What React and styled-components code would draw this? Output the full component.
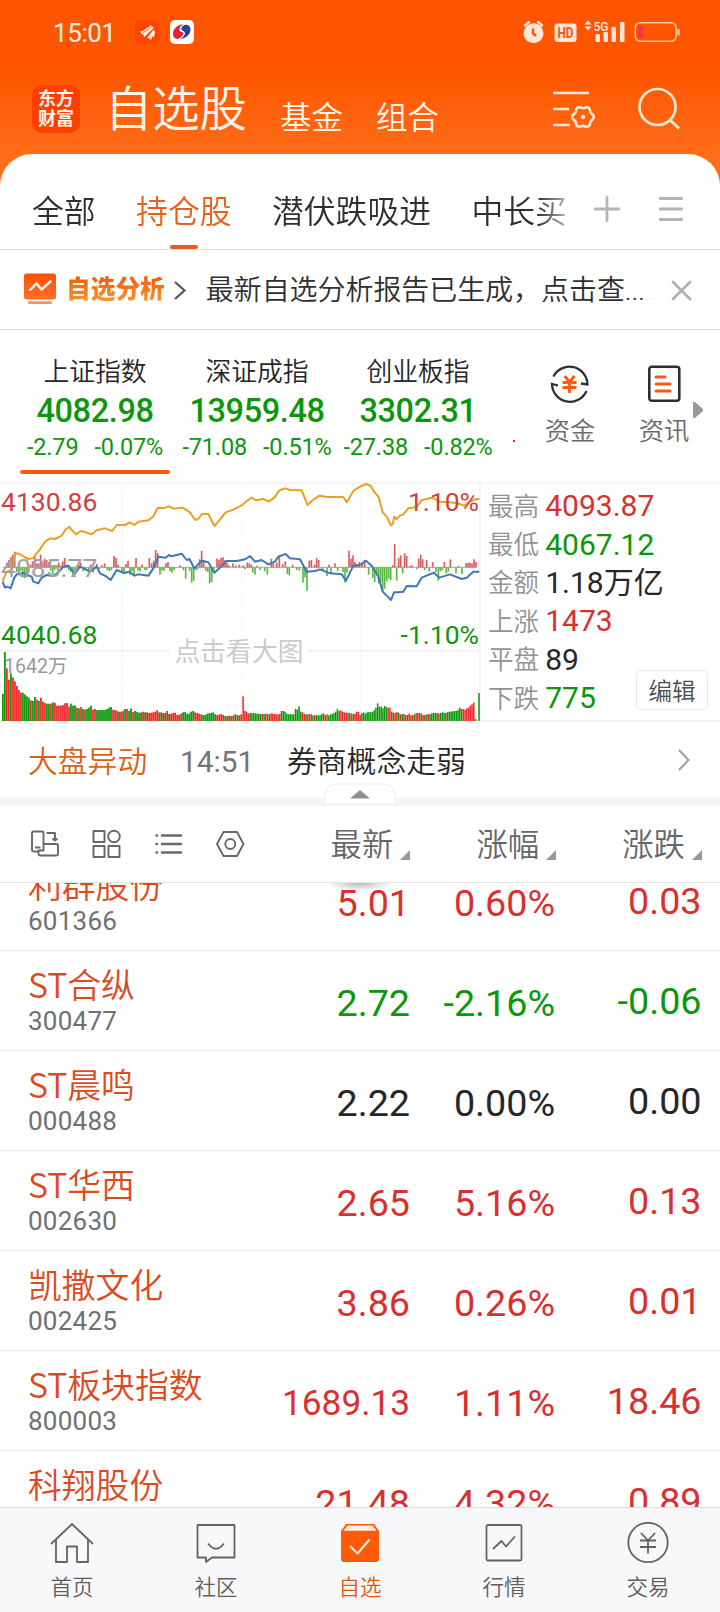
import React from 'react';
import styled, { createGlobalStyle } from 'styled-components';

const RED = '#d9302f';
const GREEN = '#0c960c';
const BLACK = '#262628';
const THIN = 350;
const tones = { up: RED, down: GREEN, flat: BLACK };

const Global = createGlobalStyle`
  * { box-sizing: border-box; }
  body { margin: 0; background: #fff; }
  body, button { font-family: Roboto, "Noto Sans CJK SC", sans-serif; }
  svg { display: block; flex: none; overflow: visible; }
`;

const Screen = styled.div`
  width: 720px;
  height: 1612px;
  display: flex;
  flex-direction: column;
  overflow: hidden;
  background: linear-gradient(#ff5500 0, #ff5500 70px, #ff6e1a 158px, #ff6e1a 200px, #fff 200px);
  color: ${BLACK};
`;

/* ---------- status bar and header ---------- */
const StatusBar = styled.div`
  height: 64px;
  flex: none;
  display: flex;
  align-items: center;
  padding: 0 40px 0 53px;
`;
const Clock = styled.div`
  width: 82px;
  font-size: 26px;
  letter-spacing: -0.4px;
  line-height: 32px;
  padding-top: 2px;
  color: #fff3ea;
`;
const StatusLeft = styled.div`
  display: flex;
  gap: 11px;
  flex: 1;
`;
const Header = styled.div`
  height: 90px;
  flex: none;
  display: flex;
  align-items: flex-start;
  padding: 21px 39px 0 32px;
`;
const Logo = styled.div`
  width: 48px;
  height: 48px;
  border-radius: 10px;
  background: #ff4000;
  color: #fff6ee;
  font-weight: 700;
  font-size: 18px;
  line-height: 20px;
  text-align: center;
  padding-top: 4px;
`;
const Title = styled.div`
  margin-left: 25px;
  width: 145px;
  font-size: 47.3px;
  font-weight: ${THIN};
  line-height: 50px;
  color: #fff8f0;
  white-space: nowrap;
`;
const HeaderLink = styled.div`
  margin: 17px 0 0 30px;
  width: 66px;
  font-size: 31.5px;
  font-weight: ${THIN};
  line-height: 34px;
  color: #fff4e8;
  white-space: nowrap;
`;
const HeaderTools = styled.div`
  margin: 3px 0 0 auto;
  display: flex;
  gap: 42px;
`;

const Sheet = styled.div`
  flex: 1;
  min-height: 0;
  display: flex;
  flex-direction: column;
  background: #fff;
  border-radius: 32px 32px 0 0;
`;

/* ---------- group tabs ---------- */
const Tabs = styled.div`
  height: 96px;
  flex: none;
  display: flex;
  border-bottom: 1px solid #e2e2e4;
  padding-left: 32px;
`;
const TabStrip = styled.div`
  width: 536px;
  overflow: hidden;
  display: flex;
  gap: 40.5px;
  mask-image: linear-gradient(90deg, #000 505px, rgba(0, 0, 0, 0.35) 536px);
`;
const Tab = styled.div`
  flex: none;
  display: flex;
  flex-direction: column;
  align-items: center;
  justify-content: space-between;
  padding-top: 39px;
  font-size: 31.8px;
  font-weight: ${THIN};
  line-height: 38px;
  white-space: nowrap;
  color: ${(p) => (p.$active ? '#e8611a' : '#2f2f31')};
  &::after {
    content: '';
    width: 28px;
    height: 4px;
    border-radius: 2px;
    background: ${(p) => (p.$active ? '#e2601c' : 'transparent')};
  }
`;
const TabTools = styled.div`
  display: flex;
  gap: 39px;
  padding: 42px 0 0 26px;
`;

/* ---------- report banner ---------- */
const Banner = styled.div`
  height: 80px;
  flex: none;
  display: flex;
  align-items: center;
  padding: 1px 29px 0 24px;
  border-bottom: 1px solid #e2e2e4;
  & > svg:first-child { margin-top: -3px; }
`;
const BannerTag = styled.div`
  margin: 0 9px 0 10px;
  font-size: 24.7px;
  font-weight: 900;
  line-height: 32px;
  white-space: nowrap;
  background: linear-gradient(#f2600e 15%, #f8952a 85%);
  background-clip: text;
  -webkit-background-clip: text;
  color: transparent;
`;
const BannerText = styled.div`
  margin-left: 20px;
  flex: 1;
  font-size: 27.95px;
  font-weight: ${THIN};
  line-height: 34px;
  padding-top: 2px;
  white-space: nowrap;
  color: #2f2f31;
`;

/* ---------- indices ---------- */
const Indices = styled.div`
  height: 152px;
  flex: none;
  display: flex;
  padding-left: 20px;
`;
const IndexCard = styled.div`
  width: 150px;
  margin-right: ${(p) => p.$gap}px;
  flex: none;
  padding-top: 25px;
  display: flex;
  flex-direction: column;
  align-items: center;
  white-space: nowrap;
  &::after {
    content: '';
    width: 150px;
    height: 4px;
    margin-top: 8px;
    border-radius: 2px;
    background: ${(p) => (p.$active ? '#ff5a0c' : 'transparent')};
  }
`;
const IndexName = styled.div`
  font-size: 25.8px;
  font-weight: ${THIN};
  line-height: 34px;
`;
const IndexValue = styled.div`
  font-size: 32.5px;
  font-weight: 500;
  line-height: 43px;
  padding-top: 1px;
  margin-bottom: -1px;
  letter-spacing: -0.4px;
  color: ${GREEN};
`;
const IndexDelta = styled.div`
  display: flex;
  gap: 16px;
  font-size: 23.5px;
  line-height: 30px;
  letter-spacing: -0.15px;
  color: ${GREEN};
`;
const RedDot = styled.i`
  width: 2px;
  height: 2px;
  margin: 110px 30px 0 -1px;
  background: ${RED};
`;
const Shortcut = styled.div`
  width: 50px;
  margin-right: 44px;
  padding-top: 35px;
  display: flex;
  flex-direction: column;
  align-items: center;
  gap: 13px;
  font-size: 25.3px;
  font-weight: ${THIN};
  line-height: 32px;
  color: #6a6a6c;
  white-space: nowrap;
`;
const More = styled.div`
  margin: 72px 0 0 -40px;
`;

/* ---------- chart and stats ---------- */
const Market = styled.div`
  height: 240px;
  flex: none;
  display: flex;
  border-top: 2px solid #f4f4f6;
  border-bottom: 2px solid #f4f4f6;
`;
const ChartBox = styled.div`
  position: relative;
  width: 481px;
  height: 236px;
  border-right: 2px solid #f4f4f6;
`;
const ChartLabel = styled.span`
  position: absolute;
  top: ${(p) => p.$top}px;
  ${(p) => (p.$right ? 'right: 0' : 'left: 1px')};
  font-size: 26.5px;
  line-height: 30px;
  color: ${(p) => p.$color};
`;
const VolumeLabel = styled(ChartLabel)`
  left: 4px;
  font-size: 19.5px;
  line-height: 24px;
`;
const ChartHint = styled.span`
  position: absolute;
  left: 170px;
  top: 152px;
  width: 138px;
  background: #fff;
  text-align: center;
  font-size: 25.8px;
  line-height: 32px;
  color: #cbcbcb;
`;
const Stats = styled.div`
  position: relative;
  flex: 1;
  padding: 3px 0 0 7px;
`;
const Stat = styled.div`
  height: 38.4px;
  display: flex;
  align-items: center;
  gap: 6px;
`;
const StatLabel = styled.span`
  font-size: 25.6px;
  font-weight: ${THIN};
  line-height: 36px;
  padding-top: 1px;
  color: #929294;
`;
const StatValue = styled.span`
  font-size: 30px;
  line-height: 36px;
  color: ${(p) => tones[p.$tone]};
`;
const EditButton = styled.button`
  position: absolute;
  right: 12px;
  bottom: 10px;
  width: 72px;
  height: 40px;
  padding: 0 0 1px;
  border: 1px solid #e8e8ea;
  border-radius: 5px;
  background: #fff;
  font-size: 23.5px;
  font-weight: ${THIN};
  color: #4c4c4e;
`;

/* ---------- ticker ---------- */
const Ticker = styled.div`
  height: 76px;
  flex: none;
  display: flex;
  align-items: center;
  padding: 3px 30px 0 28px;
  font-size: 29.8px;
  font-weight: ${THIN};
  line-height: 40px;
  white-space: nowrap;
  & > svg { margin-top: -3px; }
`;
const TickerTag = styled.span`
  width: 152px;
  color: #dc5f12;
`;
const TickerTime = styled.span`
  width: 107px;
  font-weight: 400;
  color: #747476;
`;
const TickerText = styled.span`
  flex: 1;
`;
const Divider = styled.div`
  position: relative;
  height: 8px;
  flex: none;
  background: #f5f6f9;
`;
const Handle = styled.div`
  position: absolute;
  left: 322px;
  top: -15px;
`;

/* ---------- stock list ---------- */
const ListHead = styled.div`
  position: relative;
  height: 77px;
  flex: none;
  display: flex;
  align-items: center;
  justify-content: space-between;
  border-bottom: 1px solid #e4e4e6;
  padding: 0 18px 0 30px;
  background: #fff;
`;
const ViewTools = styled.div`
  display: flex;
  align-items: center;
  gap: 33px;
`;
const SortGroup = styled.div`
  display: flex;
  gap: 66px;
  padding-top: 3px;
`;
const Sort = styled.div`
  display: flex;
  align-items: flex-end;
  gap: 7px;
  font-size: 31.4px;
  font-weight: ${THIN};
  line-height: 40px;
  color: #666668;
  &::after {
    content: '';
    margin-bottom: 6px;
    border-left: 10px solid transparent;
    border-bottom: 10px solid #98989c;
  }
`;
const List = styled.div`
  position: relative;
  flex: 1;
  min-height: 0;
  overflow: hidden;
  display: flex;
  flex-direction: column;
  justify-content: flex-start;
`;
const PullShadow = styled.div`
  position: absolute;
  left: 326px;
  top: -8px;
  width: 68px;
  height: 16px;
  background: radial-gradient(closest-side, rgba(0, 0, 0, 0.28), transparent);
`;
const Rows = styled.div`
  margin-top: -32px;
`;
const Row = styled.div`
  height: 100px;
  display: grid;
  grid-template-columns: 226px 156px 145px 146.5px;
  padding-left: 28px;
  border-bottom: 1px solid #e8e8ea;
`;
const Stock = styled.div`
  display: flex;
  flex-direction: column;
  gap: 4px;
  padding-top: 13px;
  white-space: nowrap;
`;
const Name = styled.div`
  font-family: "Noto Sans CJK SC", Roboto, sans-serif;
  font-size: 33.8px;
  font-weight: ${THIN};
  line-height: 40px;
  color: #dc4a22;
`;
const Code = styled.div`
  font-size: 26px;
  letter-spacing: 0.25px;
  line-height: 26px;
  color: #707072;
`;
const Figure = styled.div`
  padding-top: ${(p) => (p.$lift ? 27 : 29)}px;
  font-size: ${(p) => (p.$long ? 35.2 : 37.7)}px;
  line-height: ${(p) => (p.$long ? 47 : 46)}px;
  text-align: right;
  color: ${(p) => tones[p.$tone]};
`;

/* ---------- bottom navigation ---------- */
const Nav = styled.div`
  height: 105px;
  flex: none;
  display: grid;
  grid-template-columns: repeat(5, 1fr);
  border-top: 1px solid #dddde0;
  background: #f8f8fa;
`;
const NavItem = styled.div`
  display: flex;
  flex-direction: column;
  align-items: center;
  padding-top: 13px;
  gap: 8px;
  font-size: 21.5px;
  font-weight: ${THIN};
  line-height: 30px;
  color: ${(p) => (p.$active ? '#e0590e' : '#5e5e60')};
`;

/* ---------- icons ---------- */
const EastAppIcon = () => (
  <svg width="24" height="24" viewBox="0 0 24 24">
    <rect width="24" height="24" rx="5" fill="#ff4600" />
    <path d="M5 11.500C9 11 11.500 8 15.500 5.500C17 6 18 6.500 18.500 8C15 9.500 12 13 9.500 15.500C8 14.500 6 13.500 5 11.500Z" fill="#fff4ea" />
    <path d="M19 9.500C20.500 12 20 15 18.500 17.500L17.500 16L16 20C14.500 18.500 13.500 18 12 18C14.500 15.500 16 12 19 9.500Z" fill="#fff4ea" />
    <path d="M17.500 8.500C14 10.500 11.500 13.500 9 16.500" stroke="#fff4ea" strokeWidth="1.500" fill="none" />
    <path d="M8 12.500C11 11.500 13.500 9 16 7" stroke="#ff4600" strokeWidth="0.800" fill="none" />
  </svg>
);
const SwirlAppIcon = () => (
  <svg width="24" height="24" viewBox="0 0 24 24">
    <rect width="24" height="24" rx="5" fill="#fff" />
    <path d="M15 4C8 4 3 8.500 3 14C3 18 6 19.500 9 18.500C6.500 17 8 14 12 12C8.500 12 8 6.500 15 4Z" fill="#e0223a" />
    <path d="M9 19C16 19 20.500 14 20.500 9.500C20.500 6 17.500 4 14 5C10 6.500 10 10.500 13 11C16 12 15.500 16 9 19Z" fill="#27419b" />
    <path d="M7.500 13.500C10 11.500 15 11 14 14.500C13 17 10.500 18.500 8 18.800C5.500 18 5.500 15.500 7.500 13.500Z" fill="#e0223a" />
    <path d="M15 4C10 6 9.500 10 12.500 11.500C15.500 12.500 14 16.500 9 19" stroke="#fff" strokeWidth="1.200" fill="none" />
  </svg>
);
const StatusIcons = () => (
  <svg width="157" height="26" viewBox="523.500 19 157 26">
    <g fill="#ffe6d8">
      <circle cx="534" cy="33.300" r="10" />
      <path d="M525.500 25.500L529.500 22M542.500 25.500L538.500 22" stroke="#ffe6d8" strokeWidth="2.400" strokeLinecap="round" />
      <rect x="555" y="23.500" width="22" height="18.500" rx="3" />
      <path d="M588.500 20.500L592 24.500H585ZM588.500 30.500L592 26.500H585Z" />
      <rect x="596" y="34" width="4.500" height="8" rx="0.800" />
      <rect x="604" y="32" width="4.500" height="10" rx="0.800" />
      <rect x="612" y="27" width="4.500" height="15" rx="0.800" />
      <rect x="620.500" y="22" width="4.500" height="20" rx="0.800" />
    </g>
    <path d="M533.500 28.500V33.500L536.500 36" stroke="#ff5500" strokeWidth="2.400" fill="none" />
    <text x="566" y="38" textAnchor="middle" fontSize="14" fontWeight="700" fill="#ff5500" textLength="16" lengthAdjust="spacingAndGlyphs">HD</text>
    <text x="594" y="30.500" fontSize="13" fontWeight="500" fill="#ffe6d8" textLength="15" lengthAdjust="spacingAndGlyphs">5G</text>
    <rect x="635.700" y="22.700" width="41" height="18.600" rx="5" fill="none" stroke="#ffc9a0" strokeWidth="1.400" />
    <rect x="639" y="26" width="5" height="12" rx="1.500" fill="#ec3a3c" />
    <path d="M679 29V35.500" stroke="#ffc9a0" strokeWidth="2" />
  </svg>
);
const gearOutline = Array.from({ length: 72 }, (_, i) => {
  const a = (i * Math.PI) / 36;
  const r = 9.8 + 1 * Math.cos(6 * a);
  return `${(30 + r * Math.cos(a)).toFixed(2)},${(29 + r * Math.sin(a)).toFixed(2)}`;
}).join(' ');
const ListSettingsIcon = () => (
  <svg width="43" height="42" viewBox="0 0 43 42" fill="none" stroke="#ffe9d6" strokeWidth="2.600">
    <path d="M0 5H36M0 21H16M0 37H17" />
    <polygon points={gearOutline} strokeWidth="2.600" />
    <circle cx="30" cy="29" r="2.200" fill="#ffe9d6" stroke="none" />
  </svg>
);
const SearchIcon = () => (
  <svg width="43" height="43" viewBox="0 0 43 43" fill="none" stroke="#ffe9d6" strokeWidth="2.700">
    <circle cx="19.500" cy="19" r="18" />
    <path d="M31.500 31.500L41 40.500" />
  </svg>
);
const PlusIcon = () => (
  <svg width="26" height="26" viewBox="0 0 26 26" stroke="#b4b4b6" strokeWidth="2.800" strokeLinecap="round">
    <path d="M1.300 13H24.700M13 1.300V24.700" />
  </svg>
);
const MenuIcon = () => (
  <svg width="24" height="26" viewBox="0 0 24 26" stroke="#b4b4b6" strokeWidth="2.800" strokeLinecap="round">
    <path d="M1.200 2.500H22.800M1.200 13H22.800M1.200 23.500H22.800" />
  </svg>
);
const ReportIcon = () => (
  <svg width="32" height="32" viewBox="0 0 32 32" fill="none">
    <defs>
      <linearGradient id="report" x1="0" y1="0" x2="0" y2="1">
        <stop offset="0" stopColor="#ff5004" />
        <stop offset="1" stopColor="#ff6d2c" />
      </linearGradient>
    </defs>
    <rect y="0.500" width="32" height="26" rx="2.500" fill="url(#report)" />
    <path d="M6 17L12.500 10.500L17.500 16.500L26.500 8.500" stroke="#fff3ea" strokeWidth="2.400" strokeLinecap="round" />
    <rect x="4" y="28.300" width="24" height="2.700" rx="1" fill="#ee9462" />
  </svg>
);
const Chevron = ({ w, h, color, stroke }) => (
  <svg width={w} height={h} viewBox={`0 0 ${w} ${h}`} fill="none" stroke={color} strokeWidth={stroke}>
    <path d={`M1 1L${w - 1.5} ${h / 2}L1 ${h - 1}`} />
  </svg>
);
const CloseIcon = () => (
  <svg width="19" height="19" viewBox="0 0 19 19" stroke="#b0b0b2" strokeWidth="2.800" strokeLinecap="round">
    <path d="M1 1L18 18M18 1L1 18" />
  </svg>
);
const FundsIcon = () => (
  <svg width="40" height="38" viewBox="0 0 40 38" fill="none" stroke="#2f2f31" strokeWidth="2.300">
    <path d="M3.500 11.500A18 18 0 0 1 37.500 19.500L31 18.500" />
    <path d="M36.500 26A18 18 0 0 1 2 19L8 20.500" />
    <path d="M14.500 11L19.500 17L24.500 11M12.500 17.500H26.500M12.500 22.500H26.500M19.500 17V28" stroke="#ff5a0c" strokeWidth="2.800" />
  </svg>
);
const NewsIcon = () => (
  <svg width="33" height="38" viewBox="0 0 33 38" fill="none">
    <rect x="1.300" y="1.800" width="30" height="34" rx="2.500" stroke="#2f2f31" strokeWidth="2.600" />
    <path d="M8 12H17M8 19H22M8 26H22" stroke="#ee5e18" strokeWidth="3" strokeLinecap="round" />
  </svg>
);

const viewIconProps = { fill: 'none', stroke: '#68686a', strokeWidth: 1.9, strokeLinejoin: 'round' };
const RotateIcon = () => (
  <svg width="29" height="28" viewBox="0 0 29 28" {...viewIconProps}>
    <path d="M8.500 21.500H3.500Q2 21.500 2 20V3Q2 1.500 3.500 1.500H12Q13.500 1.500 13.500 3V20.500H8.500V24Q8.500 25.500 10 25.500H26.500Q28 25.500 28 24V15.500Q28 14 26.500 14H13.500M5 17.500H10.500M16.500 3H25V10M22.500 8.500L25 10.500L27.500 8.500" />
  </svg>
);
const GridIcon = () => (
  <svg width="29" height="28" viewBox="0 0 29 28" {...viewIconProps}>
    <rect x="1.500" y="1" width="11" height="11" />
    <circle cx="22" cy="6.500" r="5.800" />
    <rect x="1.500" y="16" width="11" height="11" />
    <rect x="16.500" y="16" width="11" height="11" />
  </svg>
);
const RowsIcon = () => (
  <svg width="29" height="28" viewBox="0 0 29 28" {...viewIconProps} strokeWidth="2.500" strokeLinecap="round">
    <path d="M8 5.500H27M8 14H27M8 22.500H27M2.500 5.500H3M2.500 14H3M2.500 22.500H3" />
  </svg>
);
const HexIcon = () => (
  <svg width="29" height="28" viewBox="0 0 29 28" {...viewIconProps}>
    <path d="M7.500 2H21L27.500 14L21 26H7.500L1 14Z" />
    <circle cx="14.300" cy="14" r="5" />
  </svg>
);
const HandleShape = () => (
  <svg width="76" height="22" viewBox="0 0 76 22">
    <path d="M1 21L4 8Q6 1 13 1H63Q70 1 72 8L75 21Z" fill="#fff" stroke="#ececef" />
    <path d="M38 7L48 15.500H28Z" fill="#8f8f92" />
  </svg>
);

const navIconProps = { width: 44, height: 44, viewBox: '0 0 44 44', fill: 'none', stroke: '#646466', strokeWidth: 1.8, strokeLinejoin: 'round' };
const HomeIcon = () => (
  <svg {...navIconProps}>
    <path d="M1 23L22 3L43 23M6 19V41H17V25.500H27V41H38V19" />
  </svg>
);
const ChatIcon = () => (
  <svg {...navIconProps}>
    <path d="M3.500 4H40.500V36.500H18L12 41V36.500H3.500ZM14 22.500Q22 33 30 22.500" />
  </svg>
);
const PickIcon = () => (
  <svg {...navIconProps} stroke="none">
    <path d="M8 3H36L41 10V38Q41 41 38 41H6Q3 41 3 38V10Z" fill="#ff5a08" />
    <path d="M9.500 4.500H34.500L38.500 9.800H5.500Z" fill="#fff0e4" />
    <path d="M12 25L19.500 32.500L31.500 18.500" stroke="#fff0e4" strokeWidth="2" />
  </svg>
);
const QuoteIcon = () => (
  <svg {...navIconProps}>
    <rect x="4.500" y="4" width="35" height="35.500" rx="1.500" />
    <path d="M11 28L19.500 20L24 25.500L33 15.500" />
  </svg>
);
const TradeIcon = () => (
  <svg {...navIconProps}>
    <circle cx="22" cy="21.500" r="19.700" />
    <path d="M15 12L22 19.500L29 12M14 19.500H30M14 26H30M22 19.500V32.500" />
  </svg>
);

/* ---------- intraday chart: all values are in thirds of a pixel ---------- */
const leadLine = '8,318 20,290 35,285 46,234 60,238 72,245 85,252 98,250 110,235 122,220 135,200 150,190 165,192 185,182 198,162 208,156 218,168 228,178 242,168 258,172 275,178 290,166 315,160 337,168 350,150 375,150 390,142 403,150 415,140 445,136 460,124 473,98 490,100 507,94 520,101 548,98 570,112 586,135 597,130 606,116 625,117 643,153 655,140 677,112 700,104 724,92 740,78 755,68 768,76 790,72 806,80 823,68 838,46 855,40 870,45 905,46 915,70 922,90 935,78 958,62 982,66 1030,66 1040,82 1060,48 1080,35 1098,27 1112,32 1122,50 1136,66 1148,112 1160,125 1172,150 1178,148 1183,125 1190,132 1200,122 1210,118 1225,100 1250,96 1265,76 1295,68 1320,80 1345,82 1370,84 1392,92 1410,80 1425,73 1438,72';
const priceLine = '8,320 15,338 22,335 32,340 42,310 50,298 70,294 80,300 95,305 100,320 115,325 125,308 140,300 160,303 175,292 190,275 205,272 215,285 225,295 240,275 255,282 270,290 290,275 300,295 320,305 332,315 350,285 372,294 388,290 403,302 415,298 445,302 460,280 475,245 497,248 507,240 515,244 545,236 560,255 568,252 583,280 605,257 625,262 643,293 660,278 680,258 710,258 735,253 750,243 765,260 785,255 805,268 825,260 835,245 857,237 870,250 900,253 920,290 945,288 960,283 990,295 1025,298 1038,317 1060,272 1080,270 1098,257 1115,272 1135,305 1148,350 1160,362 1173,375 1182,352 1195,352 1210,350 1220,333 1250,334 1265,308 1302,293 1318,308 1350,298 1385,312 1400,308 1420,290 1438,290';

const momentum = [
  [20, 14], [26, 22], [32, 30], [38, 38], [44, 47], [50, -14], [56, -24], [62, -10], [68, -30], [74, -32], [80, -30], [86, -12], [92, 8], [98, 18], [104, 34], [110, 12], [116, 12], [122, 38], [128, 12], [134, 26], [140, 22], [146, 16], [152, -10], [158, -24], [164, -8], [170, 6], [176, 14], [182, 6], [188, 18], [194, 28], [200, 8], [206, -8], [212, -14], [218, -22], [224, -30], [230, -10], [236, 8], [242, 14], [250, -12], [256, -8], [266, -14], [272, 8], [280, -16], [290, 10], [298, -6], [306, 6], [314, 12], [322, -8], [328, -12], [334, -8], [342, 34], [348, 28], [354, 8], [366, -12], [372, -20], [378, 10], [384, 20], [390, -22], [396, -12], [402, -24], [408, 28], [414, -10], [420, -12], [426, 8], [434, -8], [440, -8], [448, 28], [455, 12], [461, 20], [467, 52], [473, 42], [480, -22], [486, -10], [492, -10], [498, 12], [504, 16], [510, -12], [516, -16], [522, -8], [540, 6], [550, -8], [557, -34], [569, -10], [575, -46], [581, -40], [587, -8], [593, -6], [599, 24], [605, 50], [611, 22], [617, -10], [623, -14], [629, -48], [635, -44], [641, -16], [651, 26], [657, 22], [663, 28], [669, 30], [675, 22], [681, 14], [687, 6], [699, 12], [707, 6], [718, 8], [730, 6], [742, 14], [748, 12], [758, -16], [765, -22], [771, 5],
  [735, -6], [754, 8], [780, -8], [794, -12], [802, -22], [814, 26], [820, 12], [830, 14], [838, 36], [848, 10], [856, 18], [862, -20], [868, -24], [878, 8], [890, -8], [898, -10], [909, -46], [915, -30], [921, -70], [928, 20], [934, 22], [944, 8], [950, 28], [956, 22], [968, -10], [981, -26], [987, 8], [993, -18], [1005, 12], [1013, -12], [1029, -14], [1035, -46], [1041, -16], [1047, 50], [1053, 26], [1059, 36], [1065, 16], [1071, 10], [1078, 16], [1086, 14], [1094, 22], [1106, -22], [1118, -32], [1124, -44], [1130, -20], [1136, -48], [1142, -44], [1148, -74], [1154, -64], [1160, -42], [1166, -34], [1172, -38], [1178, 6], [1184, 70], [1190, -40], [1196, 28], [1202, 36], [1208, -18], [1214, 42], [1220, 34], [1230, 4], [1236, 6], [1250, -6], [1256, 26], [1262, 38], [1268, 24], [1274, -8], [1280, 22], [1288, -12], [1298, 16], [1308, -14], [1315, -40], [1321, -12], [1327, -8], [1333, 16], [1339, -18], [1345, -12], [1351, 24], [1368, -18], [1376, 4], [1386, -20], [1398, 12], [1404, 13], [1410, 14], [1416, 12], [1422, 24], [1428, 16],
];

/* r = rising, g = falling, b = both within the minute; the number is the bar height */
const morning = 'g81 g207 r158 r124 g143 r131 r119 r105 r93 r85 g85 g80 g74 g70 r62 g60 g72 r64 g60 r70 r58 r54 g52 g52 r52 g56 r54 r46 r46 r46 r48 r53 r54 r43 g52 g46 g47 r40 g38 r42 g36 r34 g36 g40 g46 r34 r36 g33 g33 g33 g33 g33 g36 g40 g42 r34 r33 r31 g28 r28 r30 g36 r36 g30 g38 r27 g30 g27 g25 b26 b28 b26 b26 r24 r25 r26 r28 r32 b26 b26 b24 b24 r30 g21 r22 r24 r25 r18 r19 r22 g26 g27 g22 g22 g28 g30 r26 r24 r22 r20 g18 g18 g22 g23 g24 g26 g20 r18 r19 r21 r18 g15 r15 g16 r15 r16 g20 r18 g17 r20'.split(' ');
const afternoon = 'r74 r30 r28 r22 g24 g24 g24 g23 g22 g22 g21 r21 g21 r22 r21 g20 r23 r22 r21 r20 r20 r21 g30 g30 g28 g22 g20 g21 g20 g20 g36 g34 g44 g28 r26 r22 g20 r20 r21 r20 g17 r17 g18 g17 g17 g20 g23 r18 r20 g17 g20 g21 g24 g28 g36 g30 r32 r28 r26 r25 g25 r24 r22 g21 r22 r28 r27 r18 g24 g26 g22 g26 g27 g26 g28 g32 g40 g53 g42 g44 g38 g45 g42 r40 r40 r28 g25 r24 r27 g24 r20 g21 r21 r18 g18 r22 r17 r18 g20 r24 r24 r24 g22 r18 r18 g20 r21 g20 g23 g24 g24 g24 r22 g24 g26 g25 r24 g27 g28 g28 g29 g30 g30 g33 g40 g36 r36 r34 r38 r40 r46 r50 r55 b6 x0 g84'.split(' ');
const volumeColors = { r: '#f02a2a', g: '#0c9a0c', b: '#806018', x: 'none' };

const VolumeBars = ({ bars, from, to }) => {
  const step = (to - from) / bars.length;
  return bars.map((v, i) => {
    const h = Number(v.slice(1));
    return <rect key={i} x={from + i * step} y={738 - h} width={step * 0.88} height={h} fill={volumeColors[v[0]]} />;
  });
};

const IntradayChart = () => (
  <svg width="479" height="236" viewBox="0 27 1437 708">
    <g stroke="#e6e6e8" strokeWidth="3" strokeDasharray="3 6">
      <path d="M367 27V738M725 27V738M1082 27V738" />
    </g>
    <path d="M0 527H1437" stroke="#f1f1f3" strokeWidth="6" />
    <path d="M8 277H1430" stroke="#a8a8aa" strokeWidth="3" />
    {momentum.map(([x, h], i) => (
      <rect key={i} x={x - 2.5} y={h > 0 ? 277 - h : 277} width="5" height={Math.abs(h)} fill={h > 0 ? '#dc5c5e' : '#5db548'} />
    ))}
    <VolumeBars bars={morning} from={6} to={727} />
    <VolumeBars bars={afternoon} from={727} to={1440} />
    <g fill="none" strokeWidth="6" strokeLinejoin="round">
      <polyline points={priceLine} stroke="#3f78b8" />
      <polyline points={leadLine} stroke="#eba024" />
    </g>
  </svg>
);

/* ---------- data ---------- */
const groups = ['全部', '持仓股', '潜伏跌吸进', '中长买'];
const indices = [
  { name: '上证指数', value: '4082.98', delta: ['-2.79', '-0.07%'], gap: 12 },
  { name: '深证成指', value: '13959.48', delta: ['-71.08', '-0.51%'], gap: 11 },
  { name: '创业板指', value: '3302.31', delta: ['-27.38', '-0.82%'], gap: 21 },
];
const stats = [
  ['最高', '4093.87', 'up'],
  ['最低', '4067.12', 'down'],
  ['金额', '1.18万亿', 'flat'],
  ['上涨', '1473', 'up'],
  ['平盘', '89', 'flat'],
  ['下跌', '775', 'down'],
];
const stocks = [
  ['利群股份', '601366', '5.01', '0.60%', '0.03', 'up'],
  ['ST合纵', '300477', '2.72', '-2.16%', '-0.06', 'down'],
  ['ST晨鸣', '000488', '2.22', '0.00%', '0.00', 'flat'],
  ['ST华西', '002630', '2.65', '5.16%', '0.13', 'up'],
  ['凯撒文化', '002425', '3.86', '0.26%', '0.01', 'up'],
  ['ST板块指数', '800003', '1689.13', '1.11%', '18.46', 'up'],
  ['科翔股份', '', '21.48', '4.32%', '0.89', 'up'],
];
const navItems = [
  ['首页', HomeIcon],
  ['社区', ChatIcon],
  ['自选', PickIcon],
  ['行情', QuoteIcon],
  ['交易', TradeIcon],
];

export default function App() {
  return (
    <Screen>
      <Global />
      <StatusBar>
        <Clock>15:01</Clock>
        <StatusLeft>
          <EastAppIcon />
          <SwirlAppIcon />
        </StatusLeft>
        <StatusIcons />
      </StatusBar>
      <Header>
        <Logo>东方<br />财富</Logo>
        <Title>自选股</Title>
        <HeaderLink>基金</HeaderLink>
        <HeaderLink>组合</HeaderLink>
        <HeaderTools>
          <ListSettingsIcon />
          <SearchIcon />
        </HeaderTools>
      </Header>
      <Sheet>
        <Tabs>
          <TabStrip>
            {groups.map((g, i) => <Tab key={g} $active={i === 1}>{g}</Tab>)}
          </TabStrip>
          <TabTools>
            <PlusIcon />
            <MenuIcon />
          </TabTools>
        </Tabs>
        <Banner>
          <ReportIcon />
          <BannerTag>自选分析</BannerTag>
          <Chevron w={12} h={19} color="#555557" stroke={2.2} />
          <BannerText>最新自选分析报告已生成，点击查...</BannerText>
          <CloseIcon />
        </Banner>
        <Indices>
          {indices.map((x, i) => (
            <IndexCard key={x.name} $active={i === 0} $gap={x.gap}>
              <IndexName>{x.name}</IndexName>
              <IndexValue>{x.value}</IndexValue>
              <IndexDelta>{x.delta.map((d) => <span key={d}>{d}</span>)}</IndexDelta>
            </IndexCard>
          ))}
          <RedDot />
          <Shortcut><FundsIcon />资金</Shortcut>
          <Shortcut><NewsIcon />资讯</Shortcut>
          <More>
            <svg width="10" height="16" viewBox="0 0 10 16"><path d="M0 0H2L10 7V9L2 16H0Z" fill="#99999b" /></svg>
          </More>
        </Indices>
        <Market>
          <ChartBox>
            <ChartLabel $top={69} $color="#a2a2a4">4085.77</ChartLabel>
            <IntradayChart />
            <ChartLabel $top={3} $color="#d04040">4130.86</ChartLabel>
            <ChartLabel $top={3} $right $color="#d04040">1.10%</ChartLabel>
            <ChartLabel $top={136} $color={GREEN}>4040.68</ChartLabel>
            <ChartLabel $top={136} $right $color={GREEN}>-1.10%</ChartLabel>
            <VolumeLabel $top={171} $color="#98989a">1642万</VolumeLabel>
            <ChartHint>点击看大图</ChartHint>
          </ChartBox>
          <Stats>
            {stats.map(([label, value, tone]) => (
              <Stat key={label}>
                <StatLabel>{label}</StatLabel>
                <StatValue $tone={tone}>{value}</StatValue>
              </Stat>
            ))}
            <EditButton>编辑</EditButton>
          </Stats>
        </Market>
        <Ticker>
          <TickerTag>大盘异动</TickerTag>
          <TickerTime>14:51</TickerTime>
          <TickerText>券商概念走弱</TickerText>
          <Chevron w={12} h={22} color="#a0a0a2" stroke={2} />
        </Ticker>
        <Divider>
          <Handle><HandleShape /></Handle>
        </Divider>
        <ListHead>
          <ViewTools>
            <RotateIcon />
            <GridIcon />
            <RowsIcon />
            <HexIcon />
          </ViewTools>
          <SortGroup>
            <Sort>最新</Sort>
            <Sort>涨幅</Sort>
            <Sort>涨跌</Sort>
          </SortGroup>
        </ListHead>
        <List>
          <PullShadow />
          <Rows>
            {stocks.map(([name, code, price, pct, change, tone]) => (
              <Row key={name}>
                <Stock>
                  <Name>{name}</Name>
                  {code && <Code>{code}</Code>}
                </Stock>
                <Figure $tone={tone} $long={price.length > 6}>{price}</Figure>
                <Figure $tone={tone}>{pct}</Figure>
                <Figure $tone={tone} $lift>{change}</Figure>
              </Row>
            ))}
          </Rows>
        </List>
        <Nav>
          {navItems.map(([label, Icon], i) => (
            <NavItem key={label} $active={i === 2}><Icon />{label}</NavItem>
          ))}
        </Nav>
      </Sheet>
    </Screen>
  );
}
